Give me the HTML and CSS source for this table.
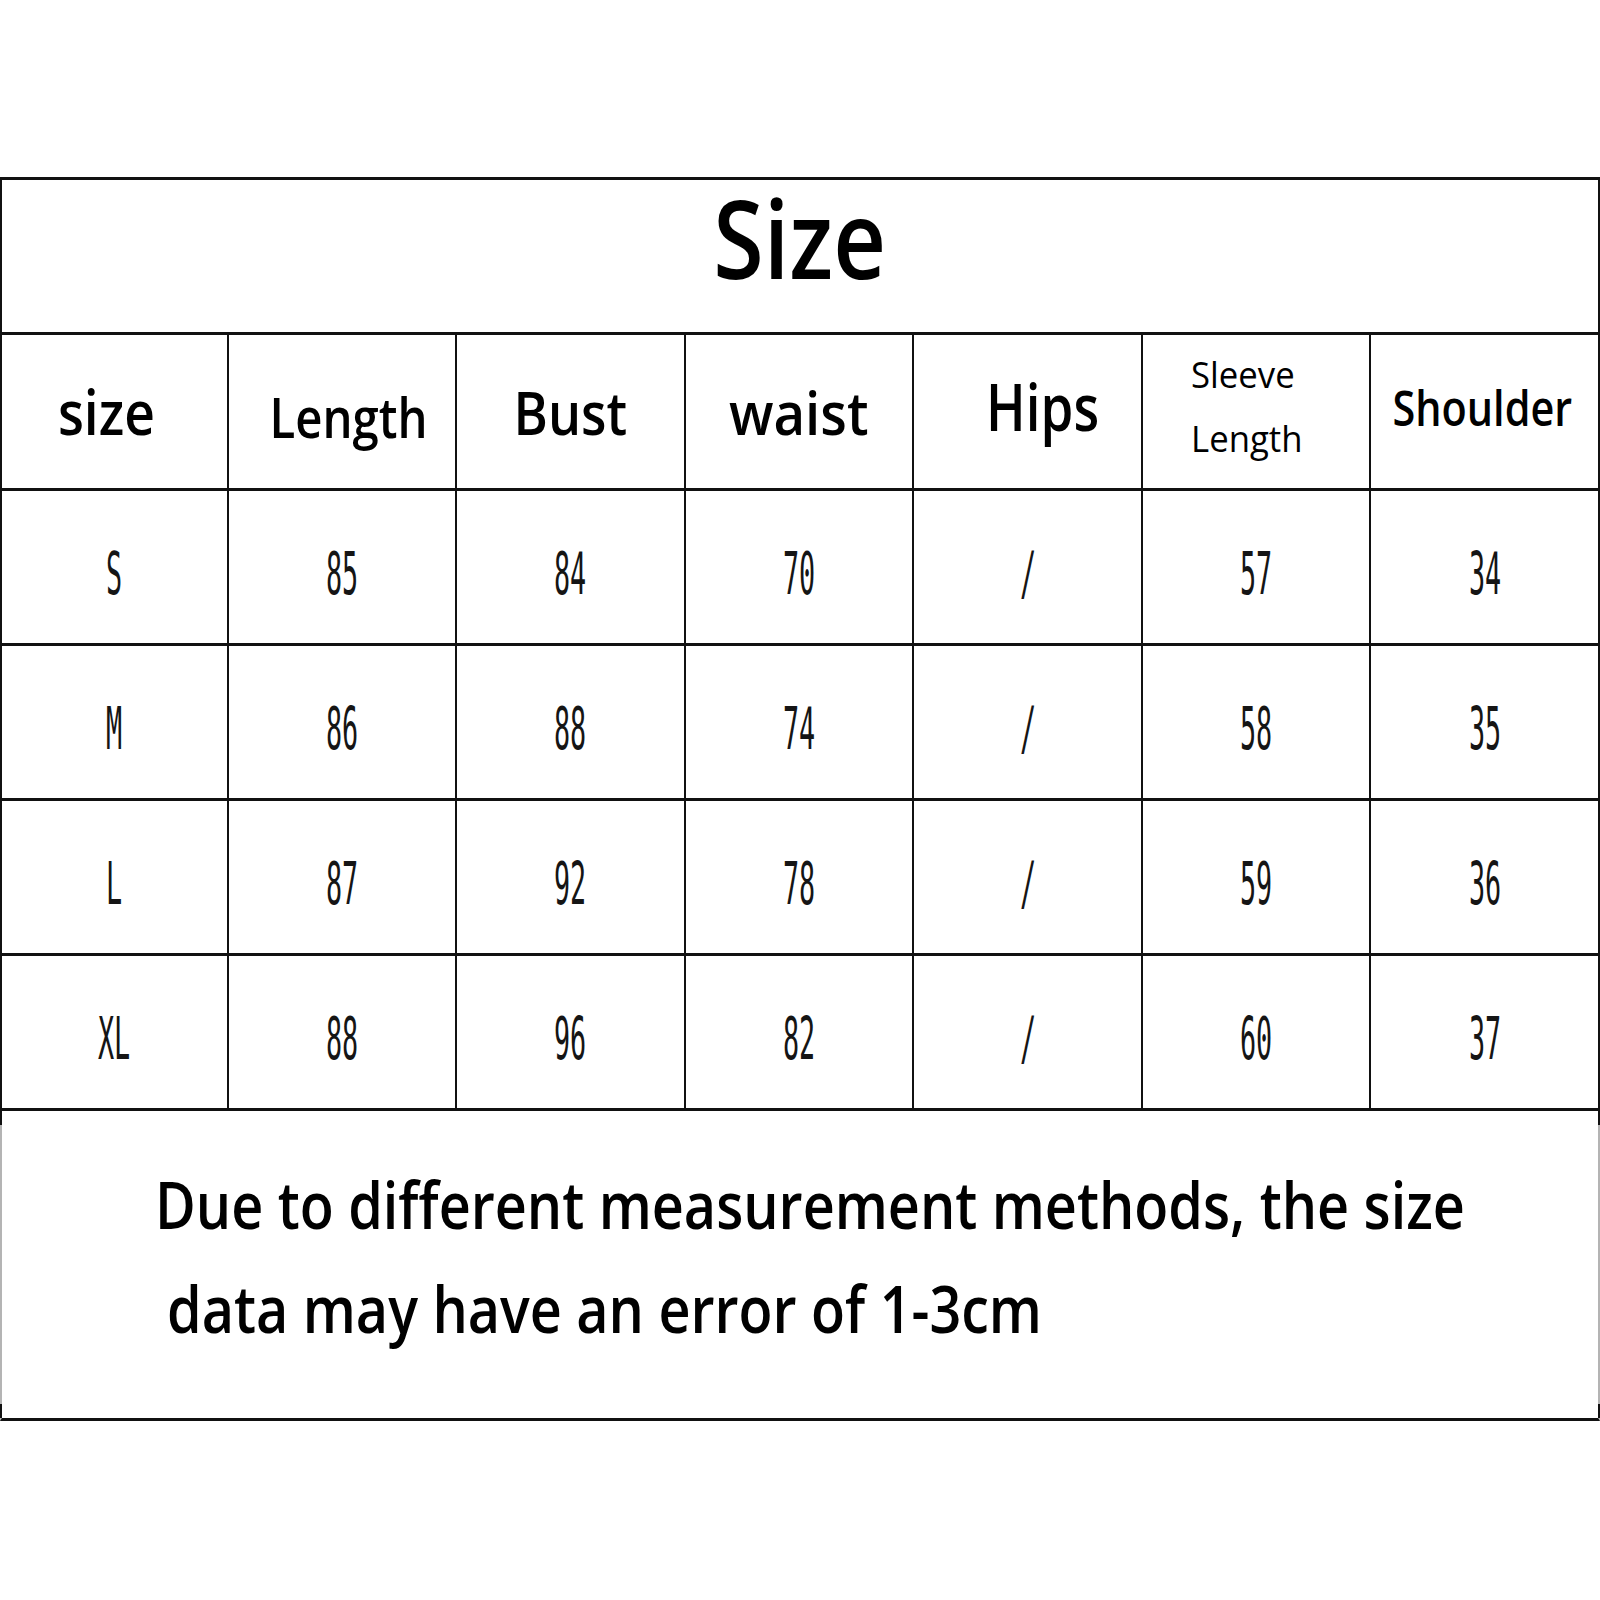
FILE: index.html
```html
<!DOCTYPE html>
<html lang="en">
<head>
<meta charset="utf-8">
<title>Size chart</title>
<link rel="stylesheet" href="styles.css">
</head>
<body>
<div class="chart">
  <div class="cell title first"><span class="t t-title">Size</span></div>

  <div class="cell head first h-size"><span class="t">size</span></div>
  <div class="cell head h-length"><span class="t">Length</span></div>
  <div class="cell head h-bust"><span class="t">Bust</span></div>
  <div class="cell head h-waist"><span class="t">waist</span></div>
  <div class="cell head h-hips"><span class="t">Hips</span></div>
  <div class="cell head h-sleeve"><span class="t">Sleeve<br>Length</span></div>
  <div class="cell head h-shoulder"><span class="t">Shoulder</span></div>

  <div class="cell data first"><span class="v">S</span></div>
  <div class="cell data"><span class="v">85</span></div>
  <div class="cell data"><span class="v">84</span></div>
  <div class="cell data"><span class="v">70</span></div>
  <div class="cell data"><span class="v">/</span></div>
  <div class="cell data"><span class="v">57</span></div>
  <div class="cell data"><span class="v">34</span></div>

  <div class="cell data first"><span class="v">M</span></div>
  <div class="cell data"><span class="v">86</span></div>
  <div class="cell data"><span class="v">88</span></div>
  <div class="cell data"><span class="v">74</span></div>
  <div class="cell data"><span class="v">/</span></div>
  <div class="cell data"><span class="v">58</span></div>
  <div class="cell data"><span class="v">35</span></div>

  <div class="cell data first"><span class="v">L</span></div>
  <div class="cell data"><span class="v">87</span></div>
  <div class="cell data"><span class="v">92</span></div>
  <div class="cell data"><span class="v">78</span></div>
  <div class="cell data"><span class="v">/</span></div>
  <div class="cell data"><span class="v">59</span></div>
  <div class="cell data"><span class="v">36</span></div>

  <div class="cell data first"><span class="v">XL</span></div>
  <div class="cell data"><span class="v">88</span></div>
  <div class="cell data"><span class="v">96</span></div>
  <div class="cell data"><span class="v">82</span></div>
  <div class="cell data"><span class="v">/</span></div>
  <div class="cell data"><span class="v">60</span></div>
  <div class="cell data"><span class="v">37</span></div>

  <div class="cell note">
    <p class="note-text">
      <span class="t l1">Due to different measurement methods, the size</span>
      <span class="t l2">data may have an error of 1-3cm</span>
    </p>
  </div>
</div>
</body>
</html>
```
FILE: styles.css
```css
html, body {
  margin: 0;
  padding: 0;
  background: #ffffff;
}

body {
  width: 1600px;
  height: 1600px;
  overflow: hidden;
  font-family: "Open Sans", "Noto Sans", sans-serif;
  color: #000;
}

.chart {
  display: grid;
  grid-template-columns: repeat(7, 1fr);
  grid-template-rows: 155px 156px 155px 155px 155px 155px 310px;
  width: 1600px;
  margin-top: 177px;
  border-top: 3px solid #111;
}

.cell {
  box-sizing: border-box;
  border-right: 2px solid #111;
  border-bottom: 3px solid #111;
  display: flex;
  justify-content: center;
  align-items: flex-start;
  min-width: 0;
}

.cell.first {
  border-left: 2px solid #111;
}

.t {
  display: inline-block;
  white-space: nowrap;
  line-height: 1;
}

/* title */
.title {
  grid-column: 1 / -1;
  padding-top: 4px;
}

.t-title {
  font-size: 108px;
  font-weight: 600;
  transform: scaleX(0.85);
}

/* header row */
.head .t {
  font-weight: 600;
}

.h-size { padding-top: 45px; }
.h-size .t { font-size: 62px; margin-right: 16px; transform: scaleX(0.86); }

.h-length { padding-top: 53px; }
.h-length .t { font-size: 56px; margin-left: 13px; transform: scaleX(0.845); }

.h-bust { padding-top: 47px; }
.h-bust .t { font-size: 60px; transform: scaleX(0.87); }

.h-waist { padding-top: 47px; }
.h-waist .t { font-size: 60px; transform: scaleX(0.91); }

.h-hips { padding-top: 37px; }
.h-hips .t { font-size: 66px; margin-left: 31px; transform: scaleX(0.80); }

.h-sleeve {
  justify-content: flex-start;
  padding: 8px 0 0 48px;
}
.h-sleeve .t {
  font-size: 36px;
  line-height: 64px;
  font-weight: 400;
  transform: scaleX(0.965);
  transform-origin: left center;
}

.h-shoulder { padding-top: 48px; }
.h-shoulder .t { font-size: 49px; margin-right: 4px; transform: scaleX(0.845); }

/* data rows */
.data {
  align-items: center;
  padding-top: 11px;
}

.v {
  display: inline-block;
  font-family: "DejaVu Sans Mono", "Liberation Mono", monospace;
  font-size: 40px;
  line-height: 1;
  color: #151515;
  transform: scale(0.67, 1.48);
}

/* note */
.note {
  position: relative;
  grid-column: 1 / -1;
  border-left: 2px solid #b4b4b4;
  border-right: 2px solid #b4b4b4;
  justify-content: flex-start;
  padding: 40px 0 0 153px;
}

.note::before,
.note::after {
  content: "";
  position: absolute;
  left: -2px;
  width: 2px;
  height: 14px;
  background: #111;
  box-shadow: 1598px 0 0 #111;
}

.note::before { top: 0; }
.note::after { bottom: 0; }

.note-text {
  flex: 1;
  min-width: 0;
  margin: 0;
  font-size: 66px;
  font-weight: 600;
  line-height: 104px;
}

.note-text .t {
  display: block;
  line-height: 104px;
  transform: scaleX(0.8435);
  transform-origin: left center;
}

.note-text .l2 {
  margin-left: 12px;
}
```
